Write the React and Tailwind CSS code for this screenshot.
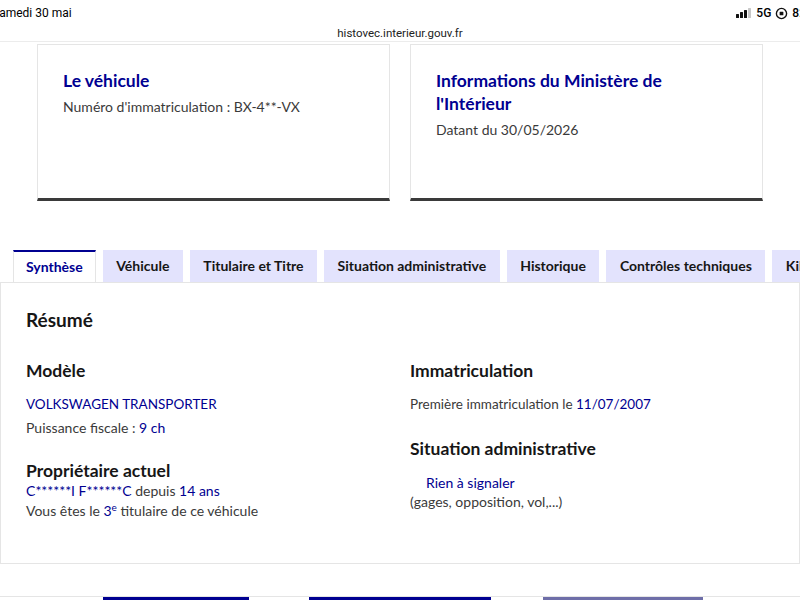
import { useState } from 'react'

const tabs = [
  'Synthèse',
  'Véhicule',
  'Titulaire et Titre',
  'Situation administrative',
  'Historique',
  'Contrôles techniques',
  'Kilométrage',
]

// ── Barre de statut + URL ─────────────────────────────────────────────────────
function StatusBar() {
  return (
    <div className="h-[42px] border-b border-[#ececec] bg-white relative font-['Roboto',sans-serif]">
      <div className="flex items-center justify-between h-[26px] text-[12px] text-black">
        <span className="-ml-[8px]">Samedi 30 mai</span>
        <div className="flex items-center gap-[4px] -mr-[6px]">
          <svg width="16" height="10" viewBox="0 0 16 10">
            <rect x="0" y="6" width="3" height="4" rx="0.5" fill="#111" />
            <rect x="4" y="4" width="3" height="6" rx="0.5" fill="#111" />
            <rect x="8" y="2" width="3" height="8" rx="0.5" fill="#111" />
            <rect x="12" y="0" width="3" height="10" rx="0.5" fill="#c8c8c8" />
          </svg>
          <span className="font-medium">5G</span>
          <svg width="13" height="13" viewBox="0 0 14 14">
            <circle cx="7" cy="7" r="5.5" fill="none" stroke="#111" strokeWidth="1.5" />
            <rect x="5" y="5" width="4" height="4" rx="0.5" fill="#111" />
          </svg>
          <span className="font-medium">82</span>
        </div>
      </div>
      <p className="text-center text-[11.5px] text-[#222] leading-[14px]">histovec.interieur.gouv.fr</p>
    </div>
  )
}

// ── Carte d'en-tête ───────────────────────────────────────────────────────────
function InfoCard({ title, children }) {
  return (
    <div className="w-[353px] h-[157px] bg-white border border-[#e5e5e5] border-b-[3px] border-b-[#3a3a3a] px-[25px] pt-[24px]">
      <h3 className="text-[17.5px] font-bold text-[#000091] leading-[23px]">{title}</h3>
      <p className="mt-[5px] text-[14px] text-[#3a3a3a] leading-[20px]">{children}</p>
    </div>
  )
}

export default function App() {
  const [active, setActive] = useState(0)

  return (
    <div className="w-[800px] h-[600px] overflow-hidden bg-white font-['Lato',sans-serif]">
      <StatusBar />

      <div className="flex gap-[20px] pl-[37px] pt-[2px]">
        <InfoCard title="Le véhicule">Numéro d'immatriculation : BX-4**-VX</InfoCard>
        <InfoCard title={<>Informations du Ministère de<br />l'Intérieur</>}>Datant du 30/05/2026</InfoCard>
      </div>

      {/* Onglets */}
      <div className="mt-[49px] flex gap-[7px] pl-[13px] whitespace-nowrap overflow-hidden">
        {tabs.map((t, i) => (
          <button
            key={t}
            onClick={() => setActive(i)}
            className={
              i === active
                ? 'h-[33px] px-[12px] pb-[2px] -mb-px bg-white border-t-2 border-t-[#000091] border-x border-x-[#e5e5e5] text-[14px] font-bold text-[#000091] relative z-10 shrink-0'
                : 'h-[32px] px-[13.5px] pb-[1px] bg-[#e3e3fd] text-[14px] font-bold text-[#161616] shrink-0'
            }
          >
            {t}
          </button>
        ))}
      </div>

      {/* Panneau Synthèse */}
      <div className="h-[282px] border border-[#e5e5e5] px-[25px] pt-[25px]">
        <h2 className="text-[19px] font-bold text-[#161616] leading-[24px]">Résumé</h2>

        <div className="mt-[27px] grid grid-cols-[384px_1fr]">
          <div>
            <h4 className="text-[17.5px] font-bold text-[#161616] leading-[24px]">Modèle</h4>
            <div className="mt-[10px] text-[13.5px] leading-[23px] text-[#3a3a3a]">
              <p className="text-[#000091]">VOLKSWAGEN TRANSPORTER</p>
              <p className="text-[14px]">Puissance fiscale : <span className="text-[#000091]">9 ch</span></p>
            </div>
            <h4 className="mt-[22px] text-[17.5px] font-bold text-[#161616] leading-[20px]">Propriétaire actuel</h4>
            <div className="text-[14px] leading-[20px] text-[#3a3a3a]">
              <p><span className="text-[#000091]">C******I F******C</span> depuis <span className="text-[#000091]">14 ans</span></p>
              <p>Vous êtes le <span className="text-[#000091]">3<sup className="text-[10px]">e</sup></span> titulaire de ce véhicule</p>
            </div>
          </div>

          <div>
            <h4 className="text-[17.5px] font-bold text-[#161616] leading-[24px]">Immatriculation</h4>
            <p className="mt-[10px] text-[13.5px] leading-[23px] text-[#3a3a3a]">
              Première immatriculation le <span className="text-[#000091]">11/07/2007</span>
            </p>
            <h4 className="mt-[21px] text-[17.5px] font-bold text-[#161616] leading-[24px]">Situation administrative</h4>
            <div className="mt-[12px] text-[14px] leading-[19px] text-[#3a3a3a]">
              <p className="pl-[16px] text-[#000091]">Rien à signaler</p>
              <p>(gages, opposition, vol,...)</p>
            </div>
          </div>
        </div>
      </div>

      {/* Boutons du bas */}
      <div className="mt-[32px] border-t border-[#e5e5e5] flex">
        <div className="ml-[103px] w-[146px] h-[8px] bg-[#000091]" />
        <div className="ml-[60px] w-[182px] h-[8px] bg-[#000091]" />
        <div className="ml-[52px] w-[160px] h-[8px] bg-[#6e6ea8]" />
      </div>
    </div>
  )
}
